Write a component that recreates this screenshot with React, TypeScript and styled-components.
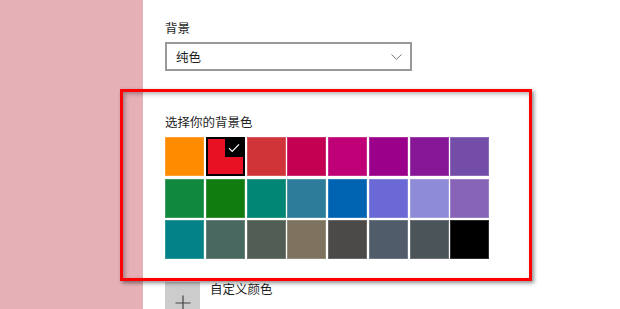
import React from "react";
import styled, { createGlobalStyle } from "styled-components";

const Global = createGlobalStyle`
  html, body { margin: 0; padding: 0; background: #fff; overflow: hidden; }
  body { font-family: "Noto Sans CJK SC", "Noto Sans", sans-serif; }
`;

const Page = styled.div`
  position: relative;
  display: flex;
  width: 620px;
  height: 309px;
  overflow: hidden;
  background: #fff;
`;

const Sidebar = styled.div`
  width: 143px;
  flex: none;
  background: #e5b0b6;
`;

const Content = styled.div`
  display: flex;
  flex-direction: column;
  padding: 20px 0 0 22px;
  & > * { flex-shrink: 0; }
`;

const Label = styled.div`
  font-size: 12.5px;
  line-height: 16px;
  color: #1f1f1f;
`;

const Select = styled.div`
  box-sizing: border-box;
  margin-top: 6px;
  width: 247px;
  height: 29px;
  border: 2px solid #999;
  display: flex;
  align-items: center;
  justify-content: space-between;
  padding: 0 8px 0 9px;
  font-size: 12.5px;
  color: #1f1f1f;
`;

const SectionTitle = styled(Label)`
  margin-top: 43px;
`;

const Grid = styled.div`
  margin-top: 7px;
  display: grid;
  grid-template-columns: repeat(8, 39px);
  grid-auto-rows: 39px;
  column-gap: 1.75px;
  row-gap: 2.5px;
`;

const Swatch = styled.div<{ $c: string; $sel?: boolean }>`
  position: relative;
  box-sizing: border-box;
  background: ${(p) => p.$c};
  box-shadow: inset 0 0 0 1px rgba(255, 255, 255, 0.18);
  ${(p) => (p.$sel ? "border: 2px solid #000; box-shadow: none;" : "")}
`;

const Corner = styled.div`
  position: absolute;
  top: -1px;
  right: -1px;
  width: 19px;
  height: 19px;
  background: #000;
  display: flex;
  align-items: center;
  justify-content: center;
`;

const CustomRow = styled.div`
  margin-top: 23px;
  display: flex;
  align-items: flex-start;
  gap: 10px;
`;

const AddButton = styled.div`
  width: 35px;
  height: 42px;
  background: #cccccc;
  display: flex;
  align-items: center;
  justify-content: center;
`;

const CustomText = styled.div`
  font-size: 12.5px;
  line-height: 16px;
  margin-top: -1px;
  color: #1f1f1f;
`;

const Highlight = styled.div`
  position: absolute;
  left: 120px;
  top: 89px;
  width: 412px;
  height: 192px;
  box-sizing: border-box;
  border: 3px solid #ff0000;
  box-shadow: 2px 2px 4px rgba(0, 0, 0, 0.45), inset 2px 2px 4px rgba(0, 0, 0, 0.3);
  pointer-events: none;
`;

const colors = [
  "#FF8C00", "#E81123", "#D13438", "#C30052", "#BF0077", "#9A0089", "#881798", "#744DA9",
  "#10893E", "#107C10", "#018574", "#2D7D9A", "#0063B1", "#6B69D6", "#8E8CD8", "#8764B8",
  "#038387", "#486860", "#525E54", "#7E735F", "#4C4A48", "#515C6B", "#4A5459", "#000000",
];

export default function App() {
  return (
    <>
      <Global />
      <Page>
        <Sidebar />
        <Content>
          <Label>背景</Label>
          <Select>
            <span>纯色</span>
            <svg width="11" height="6" viewBox="0 0 11 6">
              <path d="M0.5 0.5 L5.5 5.3 L10.5 0.5" fill="none" stroke="#777" strokeWidth="1" />
            </svg>
          </Select>
          <SectionTitle>选择你的背景色</SectionTitle>
          <Grid>
            {colors.map((c, i) => (
              <Swatch key={i} $c={c} $sel={i === 1}>
                {i === 1 && (
                  <Corner>
                    <svg width="12" height="10" viewBox="0 0 12 10">
                      <path d="M1 5.2 L4.2 8.4 L11 1.4" fill="none" stroke="#fff" strokeWidth="1.2" />
                    </svg>
                  </Corner>
                )}
              </Swatch>
            ))}
          </Grid>
          <CustomRow>
            <AddButton>
              <svg width="16" height="16" viewBox="0 0 16 16">
                <path d="M8 0.5 V15.5 M0.5 8 H15.5" stroke="#444" strokeWidth="1.2" />
              </svg>
            </AddButton>
            <CustomText>自定义颜色</CustomText>
          </CustomRow>
        </Content>
        <Highlight />
      </Page>
    </>
  );
}
